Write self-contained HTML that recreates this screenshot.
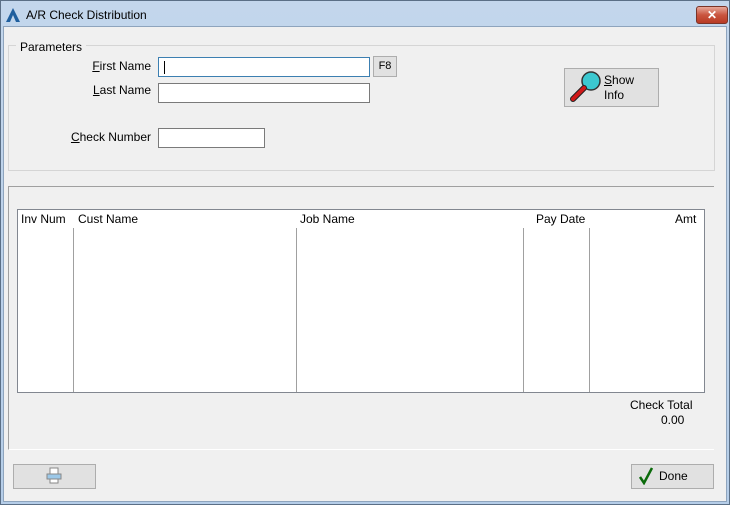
<!DOCTYPE html>
<html><head><style>
body{margin:0;width:730px;height:505px;overflow:hidden;font-family:"Liberation Sans",sans-serif;font-size:12px;color:#000;}
.win{position:absolute;left:0;top:0;width:728px;height:503px;border:1px solid #5b6f86;background:linear-gradient(#c3d6ec,#b5cde8);}
.title{position:absolute;left:25px;top:7px;font-size:12px;color:#000;}
.body{position:absolute;left:3px;top:26px;width:722px;height:474px;background:#f0f0f0;border:1px solid #8ea4bd;}
.abs{position:absolute;}
.inp{position:absolute;background:#fff;border:1px solid #7a7a7a;height:18px;}
.lbl{position:absolute;text-align:right;}
.btn{position:absolute;background:#e1e1e1;border:1px solid #adadad;}
.col{position:absolute;top:228px;height:164px;border-left:1px solid #a0a0a0;}
.hd{position:absolute;top:212px;}
</style></head><body>
<div class="win">
<svg class="abs" style="left:5px;top:7px" width="15" height="15"><polygon points="7,0 0,14 4,14 7,7 10,14 14,14" fill="#1f5f9e"/></svg>
<div class="title">A/R Check Distribution</div>
<div class="abs" style="left:695px;top:5px;width:30px;height:16px;border:1px solid #7a3428;border-radius:3px;background:linear-gradient(#e8a89a,#c9553f 50%,#b83a24);color:#fff;font-weight:bold;font-size:12px;text-align:center;line-height:16px">✕</div>
</div>
<div class="body"></div>
<div class="abs" style="left:8px;top:45px;width:705px;height:124px;border:1px solid #d5d5d5;"></div>
<div class="abs" style="left:16px;top:40px;background:#f0f0f0;padding:0 4px">Parameters</div>
<div class="lbl" style="left:60px;width:91px;top:59px"><u>F</u>irst Name</div>
<div class="inp" style="left:158px;top:57px;width:210px;border-color:#3c7fb1"><div class="abs" style="left:5px;top:3px;width:1px;height:13px;background:#000"></div></div>
<div class="btn" style="left:373px;top:56px;width:22px;height:19px;font-size:11px;text-align:center;line-height:19px">F8</div>
<div class="lbl" style="left:60px;width:91px;top:83px"><u>L</u>ast Name</div>
<div class="inp" style="left:158px;top:83px;width:210px"></div>
<div class="lbl" style="left:40px;width:111px;top:130px"><u>C</u>heck Number</div>
<div class="inp" style="left:158px;top:128px;width:105px"></div>
<div class="btn" style="left:564px;top:68px;width:93px;height:37px"></div>
<svg class="abs" style="left:568px;top:70px" width="34" height="34"><circle cx="23" cy="11" r="9" fill="#3cc8d0" stroke="#333" stroke-width="1.5"/><line x1="16" y1="18" x2="5" y2="29" stroke="#222" stroke-width="6" stroke-linecap="round"/><line x1="16" y1="18" x2="5" y2="29" stroke="#d01818" stroke-width="4" stroke-linecap="round"/></svg>
<div class="abs" style="left:604px;top:73px;line-height:15px"><u>S</u>how<br>Info</div>
<div class="abs" style="left:8px;top:186px;width:705px;height:262px;border-top:1px solid #a0a0a0;border-left:1px solid #a0a0a0;border-bottom:1px solid #fff;"></div>
<div class="abs" style="left:17px;top:209px;width:686px;height:182px;background:#fff;border:1px solid #828790;"></div>
<div class="col" style="left:73px"></div><div class="col" style="left:296px"></div><div class="col" style="left:523px"></div><div class="col" style="left:589px"></div>
<div class="hd" style="left:21px">Inv Num</div>
<div class="hd" style="left:78px">Cust Name</div>
<div class="hd" style="left:300px">Job Name</div>
<div class="hd" style="left:536px">Pay Date</div>
<div class="hd" style="left:675px">Amt</div>
<div class="abs" style="left:630px;top:398px">Check Total</div>
<div class="abs" style="left:661px;top:413px">0.00</div>
<div class="btn" style="left:13px;top:464px;width:81px;height:23px"></div>
<svg class="abs" style="left:46px;top:467px" width="16" height="17"><rect x="4" y="1" width="8" height="6" fill="#fff" stroke="#888"/><rect x="1" y="7" width="14" height="5" fill="#9cc8e8" stroke="#888"/><rect x="4" y="12" width="8" height="4" fill="#fff" stroke="#888"/></svg>
<div class="btn" style="left:631px;top:464px;width:81px;height:23px"></div>
<svg class="abs" style="left:639px;top:467px" width="14" height="18"><path d="M1 10 L5 16 L13 1" stroke="#0a6a0a" stroke-width="2.5" fill="none"/></svg>
<div class="abs" style="left:659px;top:469px">Done</div>
</body></html>
